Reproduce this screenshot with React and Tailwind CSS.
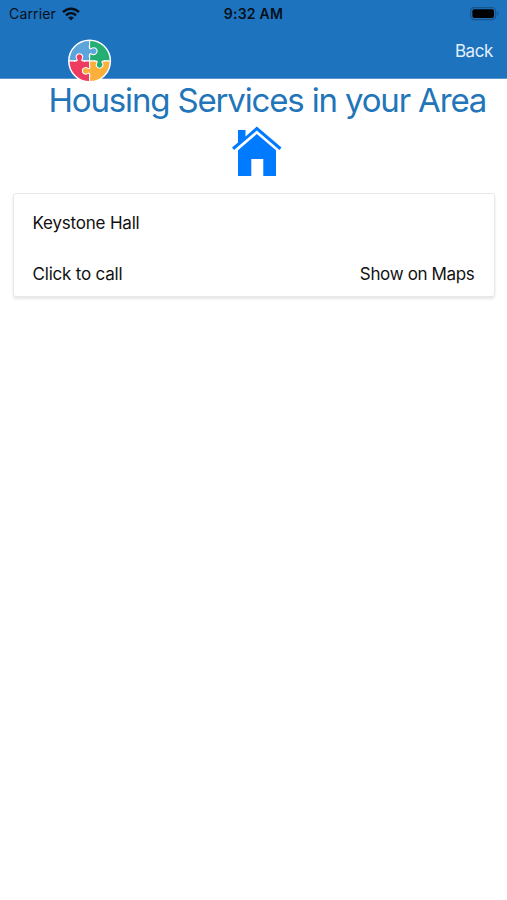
import React from "react";

const services = [{ id: 1, name: "Keystone Hall" }];

function WifiIcon() {
  return (
    <svg width="18" height="14" viewBox="0 0 18 14" fill="none" stroke="#05101c" strokeWidth="2.5">
      <path d="M1 5.2C5.6 0.6 12.4 0.6 17 5.2" />
      <path d="M4 8.3C6.9 5.5 11.1 5.5 14 8.3" />
      <path d="M9 13.4L6.1 10.5C7.8 9 10.2 9 11.9 10.5Z" fill="#05101c" stroke="none" />
    </svg>
  );
}

function BatteryIcon() {
  return (
    <svg width="30" height="14" viewBox="0 0 30 14">
      <rect x="0.6" y="0.6" width="25" height="12" rx="3.6" fill="none" stroke="#17548a" strokeWidth="1.2" />
      <rect x="2.4" y="2.2" width="21.6" height="8.9" rx="2" fill="#000" />
      <path d="M27.2 4.8C29 5.2 29 8 27.2 8.4Z" fill="#17548a" />
    </svg>
  );
}

function PuzzleLogo() {
  return (
    <svg width="44" height="44" viewBox="0.4 0 44 44">
      <clipPath id="disc">
        <circle cx="22" cy="22" r="20.5" />
      </clipPath>
      <g clipPath="url(#disc)" stroke="#fff" strokeWidth="1.1">
        <rect x="0" y="0" width="22" height="22" fill="#5ba4dc" />
        <rect x="22" y="0" width="22" height="22" fill="#25ae72" />
        <rect x="0" y="22" width="22" height="22" fill="#ee3b60" />
        <rect x="22" y="22" width="22" height="22" fill="#fbb03b" />
        {/* tabs that lock each piece into the next one */}
        <path d="M21 8H22V9C22 10.2 23 10.2 24 9.4C26 7.8 29.5 9.2 29.5 12.2C29.5 15.2 26 16.5 24 15C23 14.3 22 14.5 22 15.8V17H21" fill="#5ba4dc" />
        <path d="M27 21V22H28.5C29.8 22 29.8 23 29.2 24C27.8 26 29.2 29.2 32 29.2C34.9 29.2 36.2 26 34.8 24C34.1 23 34.2 22 35.5 22H37V21" fill="#25ae72" />
        <path d="M23 27H22V28.5C22 29.8 21 29.8 20 29.1C18 27.7 14.7 29 14.7 31.8C14.7 34.7 18 36 20 34.6C21 33.9 22 34 22 35.3V37H23" fill="#fbb03b" />
        <path d="M7 23V22H8.5C9.8 22 9.8 21 9.1 20C7.7 18 9 14.7 11.8 14.7C14.7 14.7 16 18 14.6 20C13.9 21 14 22 15.3 22H17V23" fill="#ee3b60" />
      </g>
      <circle cx="22" cy="22" r="20.8" fill="none" stroke="#fff" strokeWidth="1.5" />
    </svg>
  );
}

function HouseIcon() {
  return (
    <svg width="50" height="51" viewBox="-0.5 0 50 51" fill="#007bff">
      <path d="M5.5 4H13V10.4L24.3 0.5L49 21.5L47 24L24.3 4.5L1.5 24L-0.5 21.5L5.5 16.4Z" />
      <path d="M5.5 24.2L24.3 8L43.5 24.2V50H30.8V33H18.8V50H5.5Z" />
    </svg>
  );
}

function ServiceCard({ name }) {
  return (
    <div className="mr-3 ml-[13px] mt-4 flex h-[104px] flex-col justify-between rounded-[3px] border border-[#e8e8e8] bg-white pt-[17px] pr-[19.5px] pb-[10px] pl-[18.5px] text-[17px] leading-6 tracking-[-0.2px] text-[#111] shadow-[0_2px_3px_rgba(0,0,0,0.1)]">
      <div>{name}</div>
      <div className="flex justify-between">
        <button>Click to call</button>
        <button className="tracking-[-0.35px]">Show on Maps</button>
      </div>
    </div>
  );
}

export default function App() {
  return (
    <div className="min-h-screen bg-white font-['Inter',sans-serif]">
      <header className="h-[79px] border-b border-[#5b97cb] bg-[#1e73be]">
        <div className="grid h-[27px] grid-cols-3 items-center pr-[7px] pl-[9px] text-sm text-[#05101c]">
          <div className="flex items-center gap-[6px]">
            <span className="tracking-[0.15px]">Carrier</span>
            <WifiIcon />
          </div>
          <div className="pr-[2px] text-center font-semibold tracking-[0.25px]">9:32 AM</div>
          <div className="flex justify-end">
            <BatteryIcon />
          </div>
        </div>
        <div className="flex items-start justify-between pr-[14px] pl-[68px]">
          <div className="mt-3">
            <PuzzleLogo />
          </div>
          <button className="mt-3 text-[17px] leading-6 tracking-[-0.4px] text-[#e3f0fa]">Back</button>
        </div>
      </header>

      <main>
        <h1 className="pb-px pl-[48.5px] text-[33px] leading-[42px] tracking-[-1.16px] whitespace-nowrap text-[#2275b8]">
          Housing Services in your Area
        </h1>
        <div className="mt-1 flex justify-center pl-[6px]">
          <HouseIcon />
        </div>
        {services.map((service) => (
          <ServiceCard key={service.id} name={service.name} />
        ))}
      </main>
    </div>
  );
}
